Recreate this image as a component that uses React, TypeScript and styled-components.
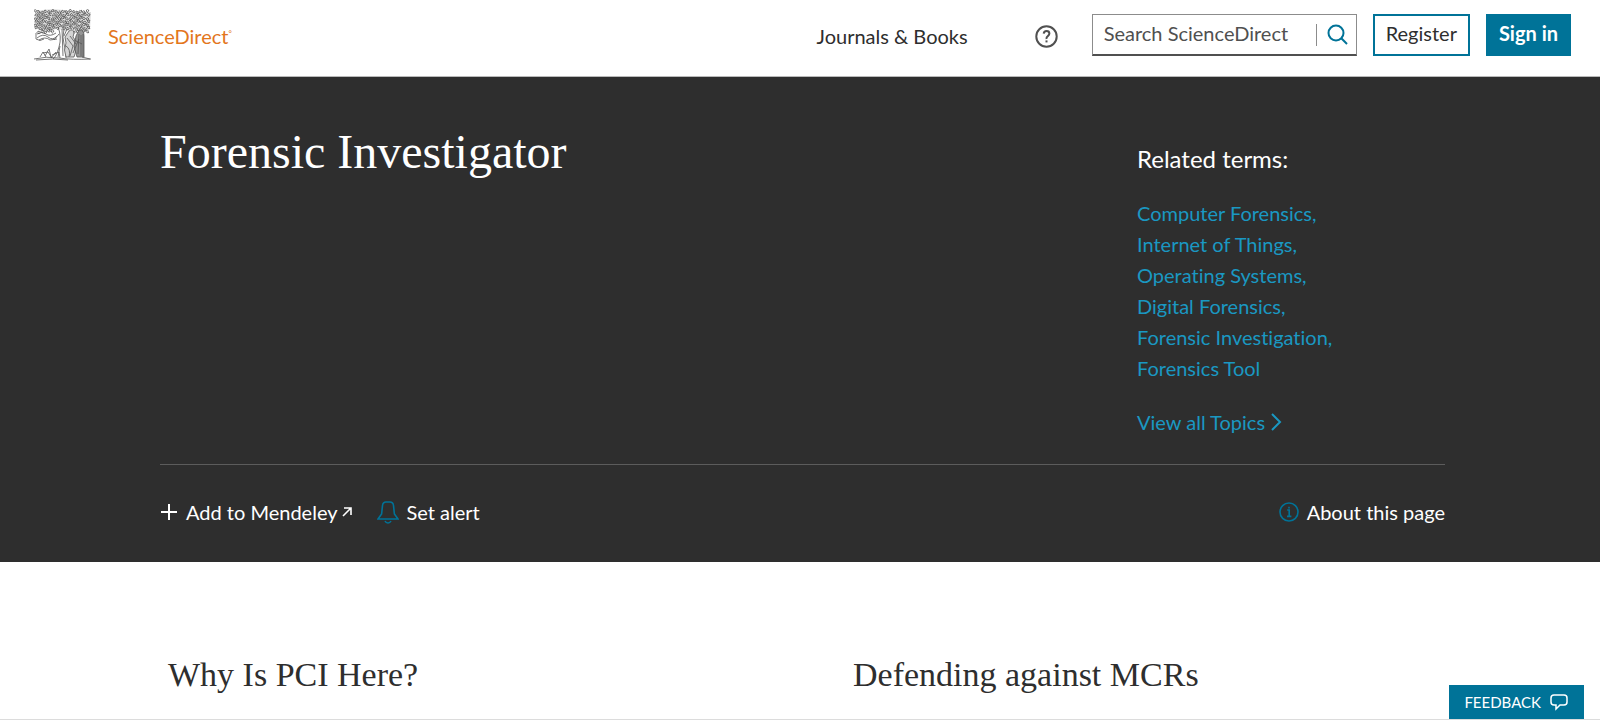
import React from "react";
import styled, { createGlobalStyle } from "styled-components";

const teal = "#007398";
const ink = "#2e2e2e";

const GlobalStyle = createGlobalStyle`
  *, *::before, *::after { box-sizing: border-box; }
  html, body { margin: 0; background: #fff; }
  body {
    color: ${ink};
    font-family: Lato, "Open Sans", sans-serif;
    font-size: 20px;
    font-variant-ligatures: none;
    line-height: 32px;
    overflow: hidden;
  }
  button, input { font: inherit; font-variant-ligatures: none; color: inherit; }
  button { cursor: pointer; }
  a { color: inherit; text-decoration: none; }
  svg { display: block; flex: none; }
`;

const Header = styled.header`
  display: flex;
  align-items: center;
  height: 77px;
  padding: 0 29px 6px 34px;
  border-bottom: 1px solid #b9b9b9;
`;

const Brand = styled.a`
  display: flex;
  align-items: center;
  gap: 16px;
  margin-right: auto;
  color: #e3761c;
  line-height: 24px;

  sup {
    font-size: 8px;
    line-height: 0;
  }
  span { padding-top: 2px; }
`;

const NavLink = styled.a`
  margin-right: 67px;
  padding-top: 2px;
`;

const HelpButton = styled.button`
  margin-right: 34px;
  padding: 2px 0 0;
  border: 0;
  background: none;
`;

const SearchForm = styled.form`
  display: flex;
  align-items: center;
  width: 265px;
  height: 42px;
  margin-right: 16px;
  border: 1px solid #8c8c8c;
  border-bottom: 2px solid #505050;
`;

const SearchInput = styled.input`
  flex: 1;
  min-width: 0;
  height: 100%;
  padding: 0 0 3px 11px;
  border: 0;
  outline: 0;
  background: none;

  &::placeholder { color: #505050; opacity: 1; }
`;

const SearchButton = styled.button`
  height: 22px;
  padding: 0 8px 0 10px;
  border: 0;
  border-left: 1px solid #8c8c8c;
  background: none;
`;

const AccountButton = styled.button<{ $primary?: boolean }>`
  height: 42px;
  padding: 0 11px 4px;
  border: 2px solid ${teal};
  background: ${(p) => (p.$primary ? teal : "#fff")};
  color: ${(p) => (p.$primary ? "#fff" : ink)};
  font-weight: ${(p) => (p.$primary ? 700 : 400)};
  white-space: nowrap;
`;

const Actions = styled.div`
  display: flex;
  gap: 16px;
`;

const Hero = styled.section`
  padding: 0 155px 0 160px;
  background: ${ink};
  color: #fff;
`;

const HeroTop = styled.div`
  display: flex;
  justify-content: space-between;
  padding: 52px 0 26px;
  border-bottom: 1px solid #5c5c5c;
`;

const Title = styled.h1`
  margin: 0;
  font: 400 48px/46px "Liberation Serif", serif;
`;

const Related = styled.aside`
  width: 308px;
  padding-top: 14px;
`;

const RelatedHeading = styled.h2`
  margin: 0 0 23px;
  font-size: 24px;
  font-weight: 400;
  line-height: 32px;
`;

const TermList = styled.ul`
  margin: 0 0 22px;
  padding: 0;
  list-style: none;
  line-height: 31px;
`;

const TopicLink = styled.a`
  display: inline-flex;
  align-items: center;
  gap: 6px;
  color: #1a98c2;
`;

const HeroBar = styled.div`
  display: flex;
  align-items: center;
  height: 97px;
  padding-bottom: 3px;
`;

const BarButton = styled.button<{ $end?: boolean }>`
  display: flex;
  align-items: center;
  gap: 8px;
  margin: 0 25px 0 0;
  padding: 0;
  border: 0;
  background: none;
  color: #fff;
  ${(p) => p.$end && "margin: 0 0 0 auto;"}
`;

const ExternalLabel = styled.span`
  display: flex;
  align-items: center;
  gap: 4px;
`;

const Excerpts = styled.main`
  display: grid;
  grid-template-columns: 1fr 1fr;
  gap: 85px;
  padding: 93px 155px 0 160px;
`;

const ExcerptTitle = styled.h2`
  margin: 0;
  padding: 0 8px;
  font: 400 34px/40px "Liberation Serif", serif;
`;

const Feedback = styled.button`
  position: fixed;
  right: 16px;
  bottom: 5px;
  display: flex;
  align-items: center;
  gap: 9px;
  height: 34px;
  padding: 0 16px 0 15px;
  border: 0;
  background: ${teal};
  color: #fff;
  font-size: 15px;
`;

const BottomEdge = styled.footer`
  position: fixed;
  right: 0;
  bottom: 0;
  left: 0;
  height: 5px;
  border-top: 1px solid #dcdcdc;
  background: #fff;
`;

const leaves = Array.from({ length: 112 }, (_, i) => {
  const row = Math.floor(i / 16);
  const x = 1 + (i % 16) * 3.5 + (row % 2) * 1.3;
  const y = 2 + row * 3.3 + ((i * 7) % 5) * 0.4;
  const turn = (i * 67) % 360;
  return { x, y, turn };
}).filter(({ x, y }) => y < 20 || (x > 4 && x < 20) || x > 38);

const TreeLogo = () => (
  <svg width="58" height="52" viewBox="0 0 58 52" fill="none" stroke="#555" strokeWidth="0.8" aria-hidden="true">
    <path d="M1 3Q12-1 29 1T57 3L56 20Q49 25 41 20L31 22 22 19Q11 26 2 19Z" fill="#ddd" stroke="none" />
    {leaves.map((l, i) => (
      <path key={i} d="M-1.6.8Q-1.2-1.6.6-1.2T1.1.9Q0 1.8-.5.2" transform={`translate(${l.x} ${l.y}) rotate(${l.turn})`} />
    ))}
    <path d="M3 25Q8 22 12 25T22 24M3 29Q9 24 14 28T23 27M5 31Q11 27 16 31L23 30M2 24V30Q6 33 10 30" />
    <path d="M24 18Q28 28 25 38T19 50M30 20Q28 29 30 35T32 49M25 25L20 31M28 20L29 47M26 37L24 48M33 20L30 27M22 43L17 49" />
    <path d="M35 22Q39 19 40 24L39 28 44 35 40 48H32Q29 41 32 34L31 28Z" fill="#d4d4d4" />
    <path d="M45 21Q50 20 50 27V48H43L40 37 42 27Z" fill="#959595" />
    <path d="M33 29L39 37 36 47M36 27L42 35M32 37Q37 40 35 48M45 25L44 45M47 26V47M49 25V47M40 31L48 35M39 44L45 30" />
    <path d="M0 50Q12 47 25 49T57 50M2 51Q19 49 34 51M6 48L9 43 12 48M9 44L14 43 18 49M18 46L25 43 26 49M11 47L15 40 17 48M48 48L56 50" />
  </svg>
);

const HelpIcon = () => (
  <svg width="23" height="23" viewBox="0 0 23 23" fill="none" stroke="#505050" strokeWidth="2" aria-hidden="true">
    <circle cx="11.5" cy="11.5" r="10.2" />
    <path d="M8.7 8.7Q8.9 6.1 11.6 6.1T14.4 8.6Q14.4 10 12.8 11.1T11.5 14" />
    <path d="M11.5 15.4V17.4" />
  </svg>
);

const SearchIcon = () => (
  <svg width="21" height="21" viewBox="0 0 21 21" fill="none" stroke={teal} strokeWidth="2" aria-hidden="true">
    <circle cx="9" cy="9" r="7.5" />
    <path d="M14.3 14.3L20 20" />
  </svg>
);

const ChevronIcon = () => (
  <svg width="11" height="18" viewBox="0 0 11 18" fill="none" stroke="currentColor" strokeWidth="2" aria-hidden="true">
    <path d="M1 1L9 9 1 17" />
  </svg>
);

const PlusIcon = () => (
  <svg width="18" height="18" viewBox="0 0 18 18" stroke="#fff" strokeWidth="2" aria-hidden="true">
    <path d="M9 1V17M1 9H17" />
  </svg>
);

const ArrowIcon = () => (
  <svg width="10" height="10" viewBox="0 0 10 10" fill="none" stroke="#fff" strokeWidth="1.6" aria-hidden="true">
    <path d="M2 1H9V8M9 1L1 9" />
  </svg>
);

const BellIcon = () => (
  <svg width="22" height="23" viewBox="0 0 22 23" fill="none" stroke={teal} strokeWidth="1.6" aria-hidden="true">
    <path d="M1 18H21L17.4 13 16.5 4.5Q16 1 13 1H9Q6 1 5.5 4.5L4.6 13Z" />
    <path d="M8 20Q9 22 11 22T14 20" />
  </svg>
);

const InfoIcon = () => (
  <svg width="20" height="20" viewBox="0 0 20 20" fill="none" stroke={teal} strokeWidth="1.6" aria-hidden="true">
    <circle cx="10" cy="10" r="9" />
    <path d="M8.2 8H10.2V14.4M8 14.4H12.4M10 4.8V6.4" />
  </svg>
);

const SpeechIcon = () => (
  <svg width="18" height="17" viewBox="0 0 18 17" fill="none" stroke="#fff" strokeWidth="1.5" aria-hidden="true">
    <path d="M4 1H14Q17 1 17 4V8Q17 11 14 11H10L6 15V11H4Q1 11 1 8V4Q1 1 4 1Z" />
  </svg>
);

const terms = [
  "Computer Forensics",
  "Internet of Things",
  "Operating Systems",
  "Digital Forensics",
  "Forensic Investigation",
  "Forensics Tool",
];

export default function App() {
  return (
    <>
      <GlobalStyle />
      <Header>
        <Brand href="#">
          <TreeLogo />
          <span>ScienceDirect<sup>°</sup></span>
        </Brand>
        <NavLink href="#">Journals &amp; Books</NavLink>
        <HelpButton type="button" aria-label="Help"><HelpIcon /></HelpButton>
        <SearchForm role="search">
          <SearchInput type="text" placeholder="Search ScienceDirect" aria-label="Search ScienceDirect" />
          <SearchButton type="button" aria-label="Search"><SearchIcon /></SearchButton>
        </SearchForm>
        <Actions>
          <AccountButton type="button">Register</AccountButton>
          <AccountButton type="button" $primary>Sign in</AccountButton>
        </Actions>
      </Header>
      <Hero>
        <HeroTop>
          <Title>Forensic Investigator</Title>
          <Related>
            <RelatedHeading>Related terms:</RelatedHeading>
            <TermList>
              {terms.map((term, i) => (
                <li key={term}>
                  <TopicLink href="#">{term}{i < terms.length - 1 && ","}</TopicLink>
                </li>
              ))}
            </TermList>
            <TopicLink href="#">View all Topics <ChevronIcon /></TopicLink>
          </Related>
        </HeroTop>
        <HeroBar>
          <BarButton type="button">
            <PlusIcon />
            <ExternalLabel>Add to Mendeley<ArrowIcon /></ExternalLabel>
          </BarButton>
          <BarButton type="button"><BellIcon />Set alert</BarButton>
          <BarButton type="button" $end><InfoIcon />About this page</BarButton>
        </HeroBar>
      </Hero>
      <Excerpts>
        <ExcerptTitle>Why Is PCI Here?</ExcerptTitle>
        <ExcerptTitle>Defending against MCRs</ExcerptTitle>
      </Excerpts>
      <BottomEdge />
      <Feedback type="button">FEEDBACK<SpeechIcon /></Feedback>
    </>
  );
}
